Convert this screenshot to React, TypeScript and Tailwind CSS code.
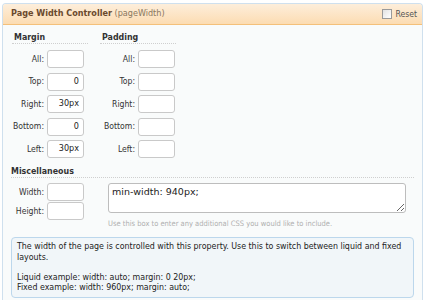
import React from "react";

const font = { fontFamily: '"DejaVu Sans Condensed", "DejaVu Sans", Verdana, sans-serif' };
const wide = { fontFamily: '"DejaVu Sans", Verdana, sans-serif' };

function Field({ label, value, labelW }: { label: string; value?: string; labelW: string }) {
  return (
    <div className="flex items-center h-[18px]">
      <div className={`${labelW} text-right pr-[3px] text-[8.6px] text-[#333]`}>{label}</div>
      <div className="w-[37px] h-[18px] bg-white border border-[#c9c9c9] rounded-[3px] flex items-center justify-end pr-[4px] text-[9px] text-[#222]">
        {value}
      </div>
    </div>
  );
}

export default function App() {
  return (
    <div className="w-[430px] h-[300px] bg-white overflow-hidden" style={font}>
      <div className="ml-[2px] mt-[3px] w-[421px] h-[297px] border-x border-t border-[#cfe0ee] rounded-t-[4px] bg-[#f9fbfb] flex flex-col">
        <div className="h-[21px] shrink-0 bg-gradient-to-b from-[#fdeedb] to-[#fcdcb2] border-b border-[#f4c07a] rounded-t-[3px] flex items-center justify-between pl-[8px] pr-[5px]">
          <div className="text-[9px] text-[#6b4a2d]">
            <span className="font-bold">Page Width Controller</span>{" "}
            <span className="text-[#8a7760]">(pageWidth)</span>
          </div>
          <div className="flex items-center gap-[3px] text-[8.6px] text-[#555]">
            <div className="w-[10px] h-[10px] border border-[#9a9a9a] bg-gradient-to-br from-[#e2e2e2] to-[#ffffff]" />
            <span>Reset</span>
          </div>
        </div>

        <div className="flex gap-[12px] pl-[9px] pt-[7px]">
          {[
            { title: "Margin", vals: ["", "0", "30px", "0", "30px"], lw: "w-[35px]" },
            { title: "Padding", vals: ["", "", "", "", ""], lw: "w-[38px]" },
          ].map((col) => (
            <div key={col.title} className="w-[76px]">
              <div className="h-[12px] border-b border-dotted border-[#cfcfcf] pl-[2px] text-[8.8px] font-bold text-[#333] leading-[10px]">
                {col.title}
              </div>
              <div className="flex flex-col gap-[4.5px] pt-[6px]">
                {["All:", "Top:", "Right:", "Bottom:", "Left:"].map((l, i) => (
                  <Field key={l} label={l} value={col.vals[i]} labelW={col.lw} />
                ))}
              </div>
            </div>
          ))}
        </div>

        <div className="mx-[8px] mt-[8px] h-[12px] border-b border-dotted border-[#cfcfcf] text-[8.8px] font-bold text-[#333] leading-[10px]">
          Miscellaneous
        </div>

        <div className="flex pl-[9px] pt-[5px]">
          <div className="flex flex-col gap-[1px]">
            <Field label="Width:" value="" labelW="w-[35px]" />
            <Field label="Height:" value="" labelW="w-[35px]" />
          </div>
          <div className="ml-[24px] flex flex-col">
            <textarea
              readOnly
              defaultValue="min-width: 940px;"
              className="w-[298px] h-[30px] bg-white border border-[#bdbdbd] rounded-[3px] px-[3px] pt-[2px] text-[9.5px] leading-[12px] text-[#222] outline-none"
              style={wide}
            />
            <div className="mt-[5px] text-[7.5px] text-[#b0b0b0]">
              Use this box to enter any additional CSS you would like to include.
            </div>
          </div>
        </div>

        <div className="mx-[8px] mt-[8px] h-[61px] border border-[#bcd7ec] rounded-[4px] bg-[#f1f6f9] px-[5px] pt-[3px] text-[8.8px] leading-[10.3px] text-[#222]">
          <div>The width of the page is controlled with this property. Use this to switch between liquid and fixed layouts.</div>
          <div className="h-[10.3px]" />
          <div>Liquid example: width: auto; margin: 0 20px;</div>
          <div>Fixed example: width: 960px; margin: auto;</div>
        </div>
      </div>
    </div>
  );
}
